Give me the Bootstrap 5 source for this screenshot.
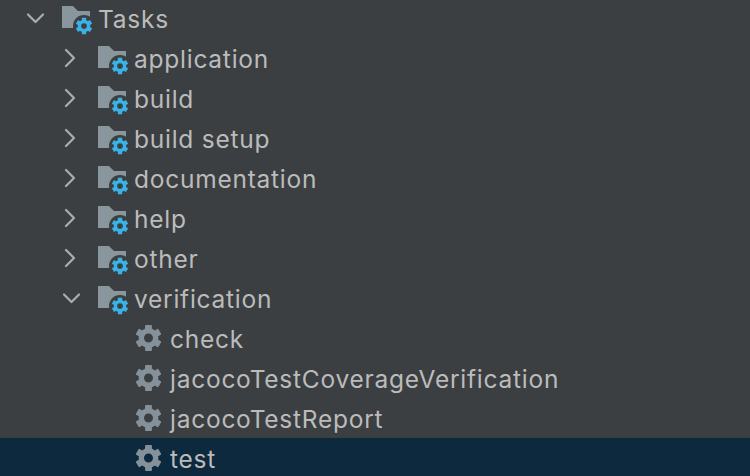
<!DOCTYPE html>
<html lang="en">
<head>
<meta charset="utf-8">
<title>Tasks</title>
<link href="https://cdn.jsdelivr.net/npm/bootstrap@5.3.0/dist/css/bootstrap.min.css" rel="stylesheet">
<style>
html, body { height: 100%; overflow: hidden; }
body { background: #3c3f41; color: #bbbbbb; font-family: Inter, "Liberation Sans", sans-serif; font-size: 24.5px; letter-spacing: .75px; }
.tree-list { margin-top: -2px; }
.tree-row { height: 40px; white-space: nowrap; }
.tree-row span { line-height: 42px; }
.tree-row.picked { background: #0d293e; }
.lvl0 { padding-left: 25px; }
.lvl1 { padding-left: 61px; }
.lvl2 { padding-left: 135px; }
.tw { width: 21px; height: 40px; flex: none; display: block; fill: none; stroke: #a9adb0; stroke-width: 2.2; stroke-linecap: round; stroke-linejoin: round; }
.fold { width: 37px; height: 40px; flex: none; display: block; margin-left: 15px; }
.cog { width: 27px; height: 40px; flex: none; display: block; margin-right: 8px; }
.fold-body { fill: #8a969d; }
.fold-cut { fill: #3c3f41; }
.blue-gear { color: #3cb1e6; }
.grey-gear { color: #85919a; }
</style>
</head>
<body>
<svg width="0" height="0" class="position-absolute">
  <defs>
    <g id="gear">
      <circle r="7.2" fill="none" stroke="currentColor" stroke-width="5.4"/>
      <g fill="currentColor">
        <rect x="-3.4" y="-13" width="6.8" height="5" rx=".8"/>
        <rect x="-3.4" y="-13" width="6.8" height="5" rx=".8" transform="rotate(60)"/>
        <rect x="-3.4" y="-13" width="6.8" height="5" rx=".8" transform="rotate(120)"/>
        <rect x="-3.4" y="-13" width="6.8" height="5" rx=".8" transform="rotate(180)"/>
        <rect x="-3.4" y="-13" width="6.8" height="5" rx=".8" transform="rotate(240)"/>
        <rect x="-3.4" y="-13" width="6.8" height="5" rx=".8" transform="rotate(300)"/>
      </g>
    </g>
    <g id="folder">
      <path class="fold-body" d="M1 8h11l5 5h12v17H1z"/>
      <circle class="fold-cut" cx="23" cy="28" r="11"/>
      <use href="#gear" class="blue-gear" transform="translate(23 28) scale(.63)"/>
    </g>
    <path id="down" d="M3 16.5l7.5 7.5 7.5-7.5"/>
    <path id="right" d="M5 12l8 8-8 8"/>
  </defs>
</svg>
<ul class="tree-list list-unstyled mb-0">
  <li class="tree-row lvl0 d-flex"><svg class="tw" viewBox="0 0 21 40"><use href="#down"/></svg><svg class="fold" viewBox="0 0 37 40"><use href="#folder"/></svg><span>Tasks</span></li>
  <li class="tree-row lvl1 d-flex"><svg class="tw" viewBox="0 0 21 40"><use href="#right"/></svg><svg class="fold" viewBox="0 0 37 40"><use href="#folder"/></svg><span>application</span></li>
  <li class="tree-row lvl1 d-flex"><svg class="tw" viewBox="0 0 21 40"><use href="#right"/></svg><svg class="fold" viewBox="0 0 37 40"><use href="#folder"/></svg><span>build</span></li>
  <li class="tree-row lvl1 d-flex"><svg class="tw" viewBox="0 0 21 40"><use href="#right"/></svg><svg class="fold" viewBox="0 0 37 40"><use href="#folder"/></svg><span>build setup</span></li>
  <li class="tree-row lvl1 d-flex"><svg class="tw" viewBox="0 0 21 40"><use href="#right"/></svg><svg class="fold" viewBox="0 0 37 40"><use href="#folder"/></svg><span>documentation</span></li>
  <li class="tree-row lvl1 d-flex"><svg class="tw" viewBox="0 0 21 40"><use href="#right"/></svg><svg class="fold" viewBox="0 0 37 40"><use href="#folder"/></svg><span>help</span></li>
  <li class="tree-row lvl1 d-flex"><svg class="tw" viewBox="0 0 21 40"><use href="#right"/></svg><svg class="fold" viewBox="0 0 37 40"><use href="#folder"/></svg><span>other</span></li>
  <li class="tree-row lvl1 d-flex"><svg class="tw" viewBox="0 0 21 40"><use href="#down"/></svg><svg class="fold" viewBox="0 0 37 40"><use href="#folder"/></svg><span>verification</span></li>
  <li class="tree-row lvl2 d-flex"><svg class="cog grey-gear" viewBox="0 0 27 40"><use href="#gear" transform="translate(13.5 20)"/></svg><span>check</span></li>
  <li class="tree-row lvl2 d-flex"><svg class="cog grey-gear" viewBox="0 0 27 40"><use href="#gear" transform="translate(13.5 20)"/></svg><span>jacocoTestCoverageVerification</span></li>
  <li class="tree-row lvl2 d-flex"><svg class="cog grey-gear" viewBox="0 0 27 40"><use href="#gear" transform="translate(13.5 20)"/></svg><span>jacocoTestReport</span></li>
  <li class="tree-row lvl2 d-flex picked"><svg class="cog grey-gear" viewBox="0 0 27 40"><use href="#gear" transform="translate(13.5 20)"/></svg><span>test</span></li>
</ul>
<script src="https://cdn.jsdelivr.net/npm/bootstrap@5.3.0/dist/js/bootstrap.bundle.min.js"></script>
</body>
</html>
